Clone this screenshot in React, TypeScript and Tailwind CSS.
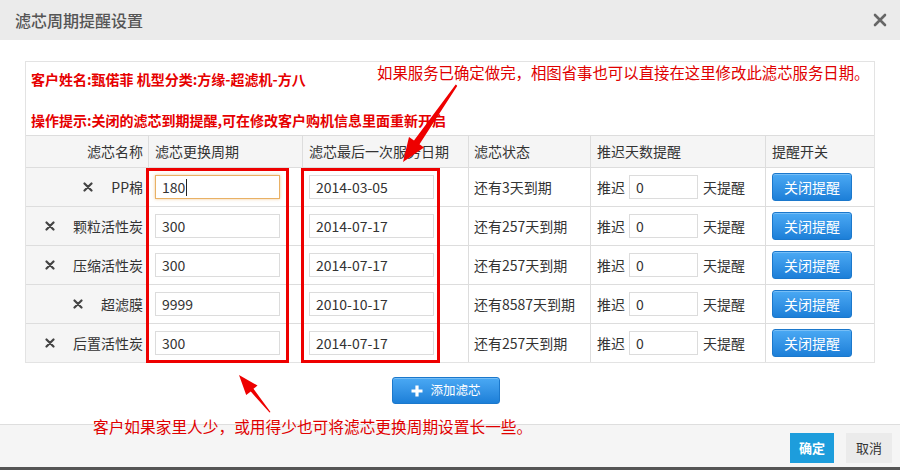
import React from "react";

const rows = [
  { name: "PP棉", cycle: "180", date: "2014-03-05", status: "还有3天到期", focus: true },
  { name: "颗粒活性炭", cycle: "300", date: "2014-07-17", status: "还有257天到期" },
  { name: "压缩活性炭", cycle: "300", date: "2014-07-17", status: "还有257天到期" },
  { name: "超滤膜", cycle: "9999", date: "2010-10-17", status: "还有8587天到期" },
  { name: "后置活性炭", cycle: "300", date: "2014-07-17", status: "还有257天到期" },
];

const cols = "grid grid-cols-[122px_154px_166px_122px_175px_109px]";

function XMark() {
  return (
    <svg width="10" height="10" viewBox="0 0 10 10" className="shrink-0">
      <path d="M1.5 1.5 L8.5 8.5 M8.5 1.5 L1.5 8.5" stroke="#444" strokeWidth="2.2" strokeLinecap="round" />
    </svg>
  );
}

function BlueBtn({ children, className = "" }: { children: React.ReactNode; className?: string }) {
  return (
    <div
      className={
        "flex items-center justify-center rounded-[3px] border border-[#1b78cc] bg-gradient-to-b from-[#4aa9f4] to-[#1c7fd8] text-white shadow-[inset_0_1px_0_rgba(255,255,255,0.25)] " +
        className
      }
    >
      {children}
    </div>
  );
}

export default function App() {
  return (
    <div className="relative w-[900px] h-[470px] overflow-hidden bg-white font-['Noto_Sans_CJK_SC','Microsoft_YaHei',sans-serif] text-[#333] flex flex-col">
      {/* header */}
      <div className="h-10 shrink-0 bg-[#ebebeb] flex items-center justify-between pl-[15px] pr-[13px]">
        <span className="text-[16px] font-medium text-[#555] leading-none">滤芯周期提醒设置</span>
        <svg width="14" height="14" viewBox="0 0 14 14">
          <path d="M2 2 L12 12 M12 2 L2 12" stroke="#666" strokeWidth="2.6" strokeLinecap="round" />
        </svg>
      </div>

      {/* body */}
      <div className="flex-1 pt-[21px] px-[25px]">
        <div className="border border-[#e3e3e3]">
          <div className="h-[73px] pt-[7px] pl-[5px] text-[14px] font-bold text-[#e60000]">
            <div className="h-5 leading-5">客户姓名:甄偌菲 机型分类:方缘-超滤机-方八</div>
            <div className="h-5 leading-5 mt-[21px]">操作提示:关闭的滤芯到期提醒,可在修改客户购机信息里面重新开启</div>
          </div>
          {/* table header */}
          <div className={cols + " border-t border-[#ddd] h-[32px] bg-[#f5f5f5] text-[14px]"}>
            <div className="flex items-center justify-end pr-[5px]">滤芯名称</div>
            <div className="flex items-center pl-[6px] border-l border-[#ddd]">滤芯更换周期</div>
            <div className="flex items-center pl-[6px] border-l border-[#ddd]">滤芯最后一次服务日期</div>
            <div className="flex items-center pl-[5px] border-l border-[#ddd]">滤芯状态</div>
            <div className="flex items-center pl-[6px] border-l border-[#ddd]">推迟天数提醒</div>
            <div className="flex items-center pl-[6px] border-l border-[#ddd]">提醒开关</div>
          </div>
          {rows.map((r) => (
            <div key={r.name} className={cols + " border-t border-[#ddd] h-[39px] text-[14px]"}>
              <div className="flex items-center justify-end pr-[5px] bg-[#f5f5f5]">
                <XMark />
                <span className="ml-[18px]">{r.name}</span>
              </div>
              <div className="flex items-center pl-[6px] border-l border-[#ddd]">
                <div
                  className={
                    "h-6 w-[125px] flex items-center pl-[6px] border " +
                    (r.focus
                      ? "border-[#e9b165] shadow-[0_0_3px_rgba(233,177,101,0.7)]"
                      : "border-[#dcdcdc]")
                  }
                >
                  {r.cycle}
                  {r.focus && <span className="ml-[1px] h-[17px] border-l border-[#222]" />}
                </div>
              </div>
              <div className="flex items-center pl-[6px] border-l border-[#ddd]">
                <div className="h-6 w-[125px] flex items-center pl-[6px] border border-[#dcdcdc]">{r.date}</div>
              </div>
              <div className="flex items-center pl-[5px] border-l border-[#ddd]">{r.status}</div>
              <div className="flex items-center pl-[6px] border-l border-[#ddd]">
                <span>推迟</span>
                <div className="ml-[4px] h-6 w-[69px] flex items-center pl-[6px] border border-[#dcdcdc]">0</div>
                <span className="ml-[5px]">天提醒</span>
              </div>
              <div className="flex items-center pl-[6px] border-l border-[#ddd]">
                <BlueBtn className="w-[80px] h-[28px] text-[14px]">关闭提醒</BlueBtn>
              </div>
            </div>
          ))}
        </div>
        <div className="flex justify-center pr-[8px] mt-[14px]">
          <BlueBtn className="w-[108px] h-[27px] text-[12.5px] gap-[7px]">
            <svg width="12" height="12" viewBox="0 0 12 12">
              <path d="M6 0.5 V11.5 M0.5 6 H11.5" stroke="#fff" strokeWidth="3.2" />
            </svg>
            <span>添加滤芯</span>
          </BlueBtn>
        </div>
      </div>

      {/* footer */}
      <div className="h-[43px] shrink-0 bg-[#f5f5f5] border-t border-[#dedede] flex justify-end items-start pt-[8px] pr-[8px] gap-[12px]">
        <div className="w-[44px] h-[30px] bg-[#1d9ddc] text-white text-[13px] font-bold flex items-center justify-center">确定</div>
        <div className="w-[46px] h-[30px] bg-[#ebebeb] text-[#333] text-[13px] flex items-center justify-center">取消</div>
      </div>
      <div className="h-[3px] shrink-0 bg-[#555]" />

      {/* annotations overlay */}
      <div className="absolute left-[377px] top-[61px] text-[15.4px] leading-[22px] text-[#e00000] whitespace-nowrap">
        如果服务已确定做完，相图省事也可以直接在这里修改此滤芯服务日期。
      </div>
      <div className="absolute left-[93px] top-[416px] text-[15.7px] leading-[22px] text-[#e00000] whitespace-nowrap">
        客户如果家里人少，或用得少也可将滤芯更换周期设置长一些。
      </div>
      <div className="absolute left-[146px] top-[168px] w-[143px] h-[195px] border-[3px] border-[#ee0000]" />
      <div className="absolute left-[301px] top-[168px] w-[139px] h-[195px] border-[3px] border-[#ee0000]" />
      <svg className="absolute left-0 top-0 pointer-events-none" width="900" height="470" viewBox="0 0 900 470">
        <polygon
          points="456.5,85 457.2,86 419.5,144.2 424,147.5 403,162 409,137 414,140.4 455.7,84.5"
          fill="#ee0000"
        />
        <polygon
          points="270.5,412 269.5,412.6 250.8,391.6 246.2,395 239,375 257.5,385.5 253.5,388.8"
          fill="#ee0000"
        />
      </svg>
    </div>
  );
}
